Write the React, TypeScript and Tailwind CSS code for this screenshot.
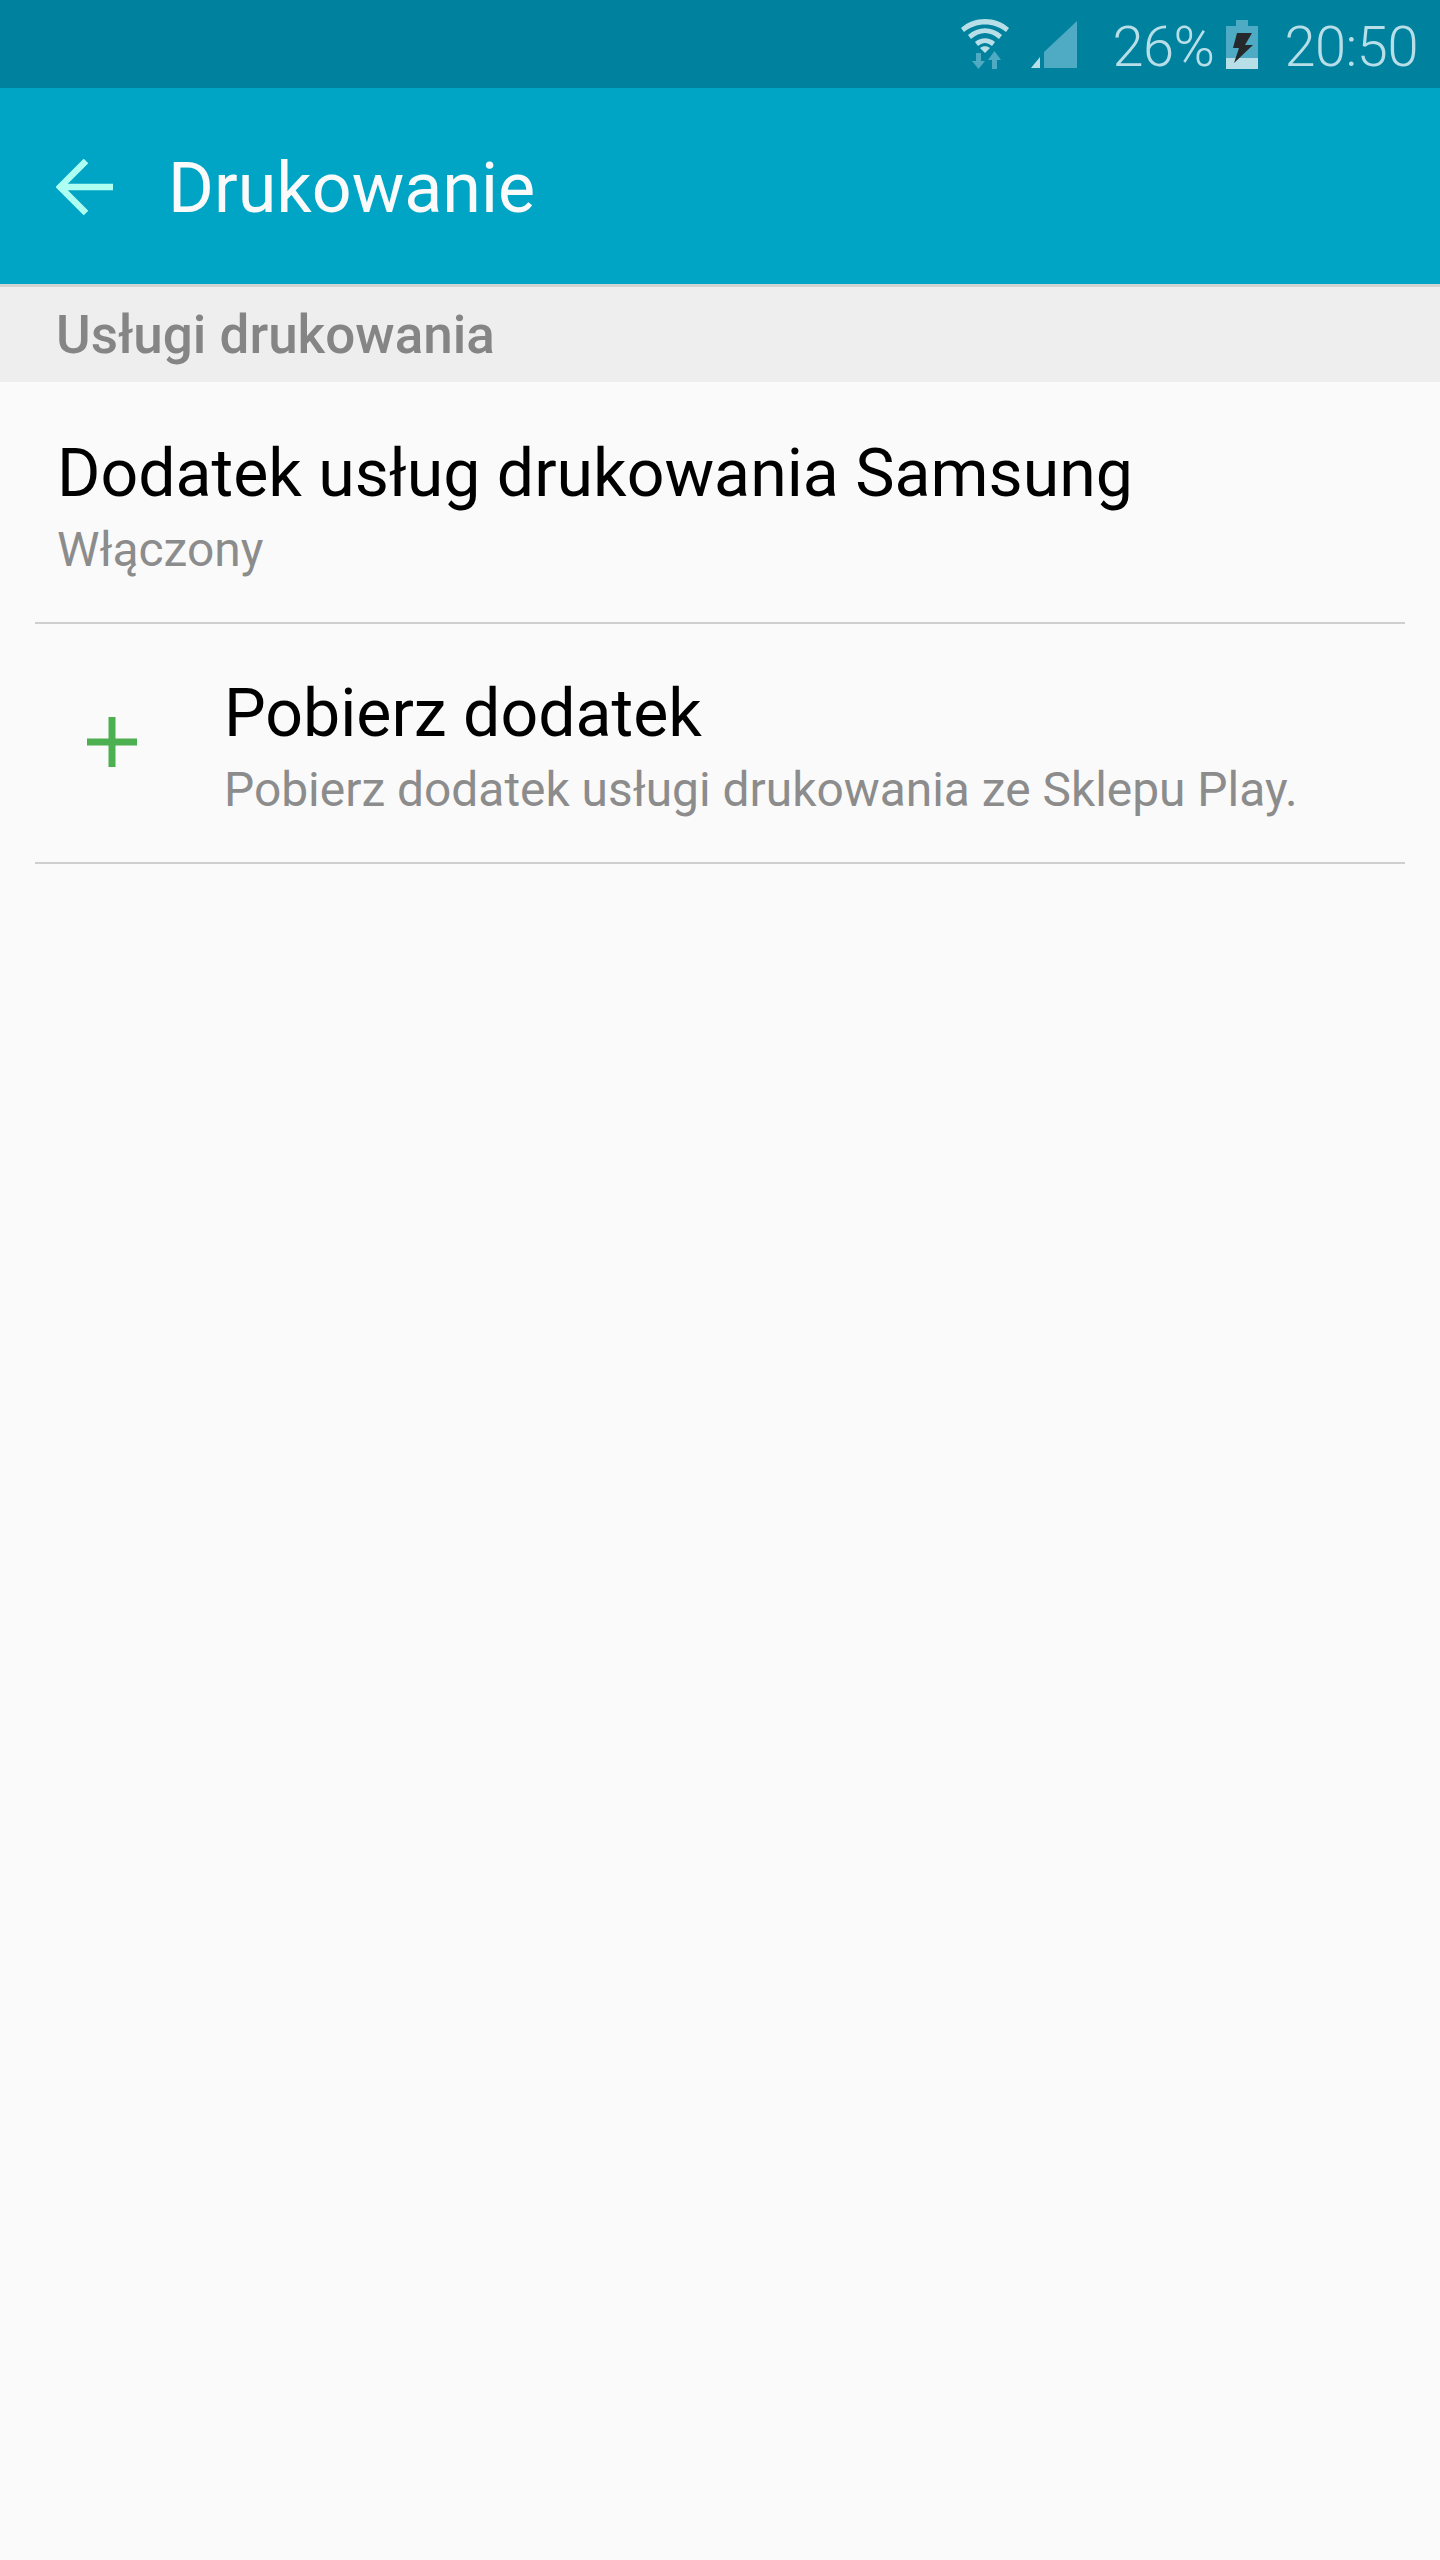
import React from 'react';

const font = { fontFamily: 'Roboto, sans-serif' };

function StatusBar() {
  return (
    <div className="h-[88px] bg-[#00829f] flex items-center justify-end pr-[22px] text-[#b8dfe8]">
      {/* wifi with up/down arrows */}
      <svg width="50" height="52" viewBox="0 0 50 52" className="mb-[2px]">
        <path d="M1 11 C14 -1 36 -1 49 11 L46 15 C34 5 16 5 4 15 Z" fill="#b8dfe8" />
        <path d="M8 18 C18 9 32 9 42 18 L39 22 C30 14 20 14 11 22 Z" fill="#b8dfe8" />
        <path d="M15 25 C21 20 29 20 35 25 L32 29 C27 25 23 25 18 29 Z" fill="#b8dfe8" />
        <path d="M20 31 C23 28.500 27 28.500 30 31 L25 36 Z" fill="#b8dfe8" />
        <path d="M16 36 H21 V44 H25 L18.500 52 L12 44 H16 Z" fill="#4fabc3" />
        <path d="M32 52 H37 V43 H41 L34.500 34 L28 43 H32 Z" fill="#4fabc3" />
      </svg>
      <svg width="48" height="48" viewBox="0 0 48 48" className="ml-[21px] mb-[-1px]">
        <path d="M46 0 V47 H13 V31 Z" fill="#4fabc3" />
        <path d="M9 36 V47 H0 Z" fill="#b8dfe8" />
      </svg>
      <span style={font} className="ml-[33px] mt-[6px] text-[56px] leading-none font-light tracking-[-0.5px]">26%</span>
      <svg width="32" height="49" viewBox="0 0 32 49" className="ml-[12px] mb-[-1px]">
        <path d="M10 0 H22 V6 H32 V38 H0 V6 H10 Z" fill="#4fabc3" />
        <rect x="0" y="38" width="32" height="11" fill="#b8dfe8" />
        <path d="M11 13 H26 L19 25 H27 L8 43 L13 28 H7 Z" fill="#26292b" />
      </svg>
      <span style={font} className="ml-[26px] mt-[6px] text-[56px] leading-none font-light tracking-[-0.5px]">20:50</span>
    </div>
  );
}

function ListRow({ title, subtitle, icon, rowClass }: { title: string; subtitle: string; icon?: React.ReactNode; rowClass: string }) {
  return (
    <div className={`mx-[35px] border-b-2 border-[#cfcfcf] flex items-center ${rowClass}`}>
      {icon && <div className="w-[189px] pl-[52px] shrink-0 pb-[12px]">{icon}</div>}
      <div className={icon ? 'pl-[0px]' : 'pl-[22px]'}>
        <div className="text-[66.2px] leading-[76px] text-black">{title}</div>
        <div className="text-[47.9px] leading-[60px] font-normal text-[#8c8c8c] mt-[8px]">{subtitle}</div>
      </div>
    </div>
  );
}

export default function App() {
  return (
    <div style={font} className="w-[1440px] h-[2560px] bg-[#fafafa]">
      <StatusBar />
      <div className="h-[196px] bg-[#00a5c5] flex items-center pl-[56px]">
        <svg width="58" height="56" viewBox="0 0 58 56" className="mt-[2px]">
          <path d="M57 28 H4 M30 2 L4 28 L30 54" fill="none" stroke="#aefff2" strokeWidth="6.500" />
        </svg>
        <span className="ml-[54px] mt-[4px] text-[70px] font-normal text-[#fafafa] leading-none">Drukowanie</span>
      </div>
      <div className="h-[98px] bg-[#eeeeee] border-t-[3px] border-[#d3d3d3] flex items-center pl-[56px]">
        <span className="mt-[2px] text-[53px] font-medium text-[#858585] leading-none">Usługi drukowania</span>
      </div>
      <ListRow rowClass="h-[242px] pt-[12px]" title="Dodatek usług drukowania Samsung" subtitle="Włączony" />
      <ListRow
        rowClass="h-[240px] pt-[9px]"
        title="Pobierz dodatek"
        subtitle="Pobierz dodatek usługi drukowania ze Sklepu Play."
        icon={
          <svg width="50" height="50" viewBox="0 0 50 50">
            <path d="M25 0 V50 M0 25 H50" stroke="#4caf50" strokeWidth="7" fill="none" />
          </svg>
        }
      />
    </div>
  );
}
